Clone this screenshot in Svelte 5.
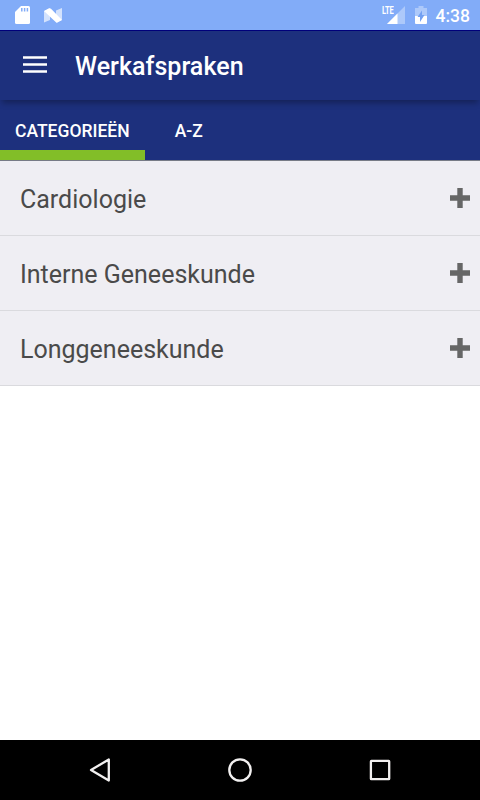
<script>
	let categories = ['Cardiologie', 'Interne Geneeskunde', 'Longgeneeskunde'];
	let tabs = ['Categorieën', 'A-Z'];
	let active = $state(0);
</script>

<div class="screen">
	<div class="status">
		<svg class="sd" width="16" height="18" viewBox="0 0 16 18">
			<path d="M6 0h7.500q1.500 0 1.500 1.500v15q0 1.500-1.500 1.500h-12Q0 18 0 16.500V6z" fill="#fff" />
			<path d="M6.800 2v3.500M9.600 2v3.500M12.400 2v3.500" stroke="#82acf8" stroke-width="1.500" />
		</svg>
		<svg class="nougat" width="18" height="15" viewBox="0 0 18 15">
			<path d="M0 3 6 .5v11.500L0 14.500zM12 2.500 18 0v12l-6 2.500z" fill="#fff" opacity=".65" />
			<path d="M0 3 5 .300Q6.200-.2 7 .800L18 12l-4.500 2.500q-1 .500-1.800-.400z" fill="#fff" />
		</svg>
		<span class="fill"></span>
		<div class="signal">
			<svg width="20" height="18" viewBox="0 0 20 18">
				<path d="M20 0v18H2z" fill="#fff" opacity=".35" />
				<path d="M12.500 7.500V18H2z" fill="#fff" />
			</svg>
			<span class="lte">LTE</span>
		</div>
		<svg class="battery" width="12" height="18" viewBox="0 0 12 18">
			<path d="M3.500 0h5v2H12v8H0V2h3.500z" fill="#fff" opacity=".35" />
			<path d="M0 10h12v7q0 1-1 1H1q-1 0-1-1z" fill="#fff" />
			<path d="M7 4.500v4.500h2.500L5 16v-5H2.500z" fill="#72a0f2" />
		</svg>
		<span class="clock">4:38</span>
	</div>

	<header>
		<svg width="24" height="18" viewBox="0 0 24 18">
			<path d="M0 1.500h24M0 8.500h24M0 15.500h24" stroke="#fff" stroke-width="2.600" />
		</svg>
		<h1>Werkafspraken</h1>
	</header>

	<nav class="tabs">
		{#each tabs as tab, i}
			<button class:active={active === i} onclick={() => (active = i)}>{tab}</button>
		{/each}
	</nav>

	<ul>
		{#each categories as category}
			<li>
				<span>{category}</span>
				<svg width="20" height="20" viewBox="0 0 20 20">
					<path d="M10 0v20M0 10h20" stroke="#666" stroke-width="5.400" />
				</svg>
			</li>
		{/each}
	</ul>

	<footer>
		<svg width="24" height="26" viewBox="0 0 24 26">
			<path d="M20.800 2.500v21L3 13z" />
		</svg>
		<svg width="26" height="26" viewBox="0 0 26 26">
			<circle cx="13" cy="13" r="10.700" />
		</svg>
		<svg width="24" height="24" viewBox="0 0 24 24">
			<rect x="2.900" y="2.900" width="18.300" height="18.300" rx=".5" />
		</svg>
	</footer>
</div>

<style>
	:global(body) {
		margin: 0;
	}
	.screen {
		display: flex;
		flex-direction: column;
		height: 800px;
		background: #fff;
		font-family: Roboto, sans-serif;
		color: #fff;
	}
	svg {
		display: block;
		flex-shrink: 0;
	}
	.status {
		display: flex;
		align-items: flex-start;
		box-sizing: border-box;
		height: 30px;
		padding: 6px 10px 0 15px;
		background: #82acf8;
	}
	.nougat {
		margin: 2px 0 0 13px;
	}
	.fill {
		flex: 1;
	}
	.signal {
		position: relative;
		margin-right: 10px;
	}
	.lte {
		position: absolute;
		left: -3px;
		top: 0;
		font-size: 10px;
		line-height: 10px;
		font-weight: 700;
		letter-spacing: -0.3px;
		transform: scaleX(0.75);
		transform-origin: left;
	}
	.clock {
		margin-left: 9px;
		font-size: 17.500px;
		line-height: 20px;
		font-weight: 500;
	}
	header {
		position: relative;
		display: flex;
		align-items: center;
		box-sizing: border-box;
		height: 70px;
		padding-left: 23px;
		border-top: 1px solid #00007a;
		background: #1d307d;
		box-shadow: 0 5px 6px -2px rgba(0, 0, 0, 0.3);
	}
	header svg {
		margin-bottom: 2px;
	}
	h1 {
		margin: 2px 0 0 28px;
		font-size: 25px;
		line-height: 30px;
		font-weight: 500;
		letter-spacing: 0.04px;
	}
	.tabs {
		display: flex;
		box-sizing: border-box;
		height: 61px;
		border-bottom: 1px solid #777b86;
		background: #1d307d;
	}
	button {
		box-sizing: border-box;
		height: 60px;
		padding: 12px 15px 0;
		border: 0;
		border-bottom: 10px solid transparent;
		background: none;
		color: #fff;
		font: 500 17.500px/38px Roboto, sans-serif;
		text-transform: uppercase;
	}
	button + button {
		padding-left: 30px;
	}
	.active {
		border-bottom-color: #82be28;
	}
	ul {
		flex: 1;
		margin: 0;
		padding: 0;
		list-style: none;
	}
	li {
		display: flex;
		align-items: center;
		justify-content: space-between;
		box-sizing: border-box;
		height: 75px;
		padding: 0 10px 0 20px;
		border-bottom: 1px solid #dadade;
		background: #efeef3;
		color: #4a4a4a;
		font-size: 25px;
	}
	li span {
		margin-top: 3px;
	}
	footer {
		display: flex;
		align-items: center;
		justify-content: space-between;
		box-sizing: border-box;
		height: 60px;
		padding: 0 88px;
		background: #000;
	}
	footer svg {
		fill: none;
		stroke: #f2f0f0;
		stroke-width: 2.300;
		stroke-linejoin: round;
	}
</style>
